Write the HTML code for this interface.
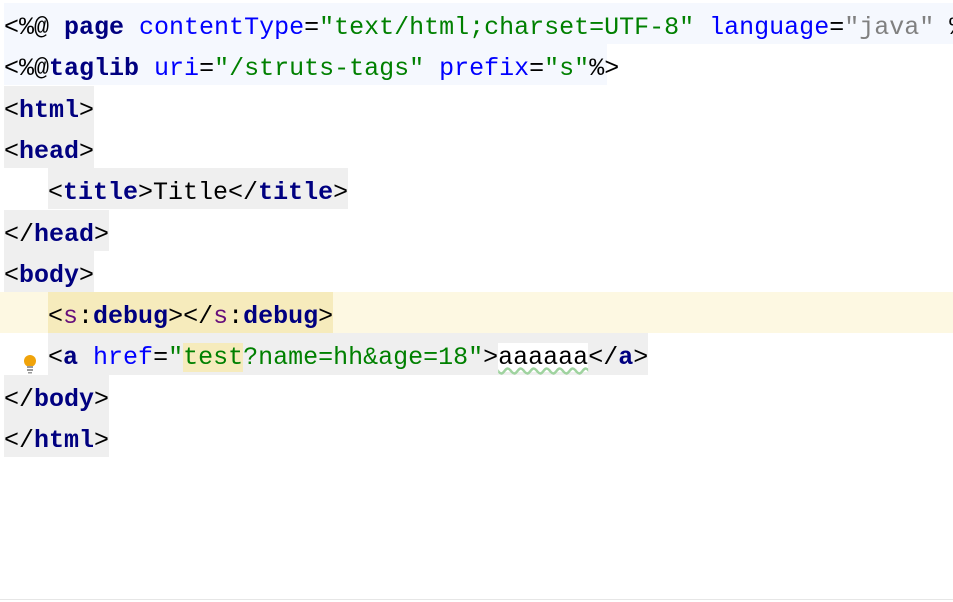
<!DOCTYPE html>
<html><head><meta charset="utf-8"><style>
body{margin:0;width:953px;height:602px;background:#fff;position:relative;overflow:hidden;font-family:"Liberation Mono",monospace;font-size:25px;}
.l{position:absolute;height:41px;line-height:49px;white-space:pre;color:#000;overflow:hidden}
.g{background:#efefef}
.t{color:#000080;font-weight:bold}
.a{color:#0000ff}
.v{color:#008000}
.p{color:#660e7a}
.k{color:#808080}
</style></head><body>
<div style="position:absolute;left:4px;top:3px;width:949px;height:41px;background:#f5f8fe"></div>
<div style="position:absolute;left:4px;top:44px;width:603px;height:41px;background:#f5f8fe"></div>
<div style="position:absolute;left:0;top:292px;width:953px;height:41px;background:#fdf8e2"></div>
<div style="position:absolute;left:0;top:599px;width:953px;height:1px;background:#e6e6e6"></div>

<div class="l" style="left:4px;top:3px">&lt;%@ <span class="t">page</span> <span class="a">contentType</span>=<span class="v">"text/html;charset=UTF-8"</span> <span class="a">language</span>=<span class="k">"java"</span> %&gt;</div>
<div class="l" style="left:4px;top:44px">&lt;%@<span class="t">taglib</span> <span class="a">uri</span>=<span class="v">"/struts-tags"</span> <span class="a">prefix</span>=<span class="v">"s"</span>%&gt;</div>
<div class="l g" style="left:4px;top:86px">&lt;<span class="t">html</span>&gt;</div>
<div class="l g" style="left:4px;top:127px">&lt;<span class="t">head</span>&gt;</div>
<div class="l g" style="left:48px;top:168px">&lt;<span class="t">title</span>&gt;Title&lt;/<span class="t">title</span>&gt;</div>
<div class="l g" style="left:4px;top:210px">&lt;/<span class="t">head</span>&gt;</div>
<div class="l g" style="left:4px;top:251px">&lt;<span class="t">body</span>&gt;</div>
<div class="l" style="left:48px;top:292px;background:#f6ebbc">&lt;<span class="p">s</span>:<span class="t">debug</span>&gt;&lt;/<span class="p">s</span>:<span class="t">debug</span>&gt;</div>
<div class="l g" style="left:48px;top:333px;height:42px">&lt;<span class="t">a</span> <span class="a">href</span>=<span class="v">"<span style="background:#f6ebbc">test</span>?name=hh&amp;age=18"</span>&gt;<span style="background:#fff;text-decoration:underline wavy #9fd39f;text-underline-offset:3px">aaaaaa</span>&lt;/<span class="t">a</span>&gt;</div>
<div class="l g" style="left:4px;top:375px">&lt;/<span class="t">body</span>&gt;</div>
<div class="l g" style="left:4px;top:416px">&lt;/<span class="t">html</span>&gt;</div>

<svg style="position:absolute;left:22px;top:353px" width="16" height="22" viewBox="0 0 16 22">
<circle cx="8" cy="8" r="6" fill="#f0a30a"/>
<rect x="5" y="13" width="6" height="2" fill="#999"/>
<rect x="5" y="16" width="6" height="2" fill="#999"/>
<rect x="6" y="19" width="4" height="1.5" fill="#999"/>
</svg>
</body></html>
